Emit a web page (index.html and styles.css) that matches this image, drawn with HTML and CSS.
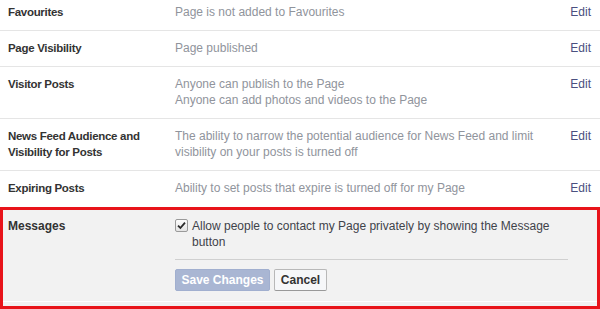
FILE: index.html
```html
<!DOCTYPE html>
<html>
<head>
<meta charset="utf-8">
<link rel="stylesheet" href="styles.css">
</head>
<body>
<div class="settings">
  <div class="row first">
    <div class="label">Favourites</div>
    <div class="value">Page is not added to Favourites</div>
    <a class="edit">Edit</a>
  </div>
  <div class="row">
    <div class="label">Page Visibility</div>
    <div class="value">Page published</div>
    <a class="edit">Edit</a>
  </div>
  <div class="row">
    <div class="label">Visitor Posts</div>
    <div class="value">Anyone can publish to the Page<br>Anyone can add photos and videos to the Page</div>
    <a class="edit">Edit</a>
  </div>
  <div class="row">
    <div class="label">News Feed Audience and Visibility for Posts</div>
    <div class="value">The ability to narrow the potential audience for News Feed and limit visibility on your posts is turned off</div>
    <a class="edit">Edit</a>
  </div>
  <div class="row last">
    <div class="label">Expiring Posts</div>
    <div class="value">Ability to set posts that expire is turned off for my Page</div>
    <a class="edit">Edit</a>
  </div>
  <div class="messages">
    <div class="msg-inner">
      <div class="label msg-label">Messages</div>
      <div class="msg-body">
        <div class="check-line">
          <span class="checkbox"><svg width="9" height="9" viewBox="0 0 9 9"><path d="M1 4.6 L3.4 7 L8 1.6" fill="none" stroke="#2b2b2b" stroke-width="1.8"/></svg></span>
          <span class="check-text">Allow people to contact my Page privately by showing the Message button</span>
        </div>
        <div class="divider"></div>
        <div class="buttons">
          <button class="btn save">Save Changes</button>
          <button class="btn cancel">Cancel</button>
        </div>
      </div>
    </div>
  </div>
</div>
</body>
</html>
```

FILE: styles.css
```css
html, body {
  margin: 0;
  padding: 0;
  background: #fff;
}
body {
  font-family: "Liberation Sans", Arial, sans-serif;
  font-size: 12px;
  line-height: 16px;
  width: 600px;
  height: 309px;
  overflow: hidden;
}
.row {
  display: grid;
  grid-template-columns: 155px 1fr auto;
  column-gap: 12px;
  padding: 9px 9px 10px 8px;
  border-bottom: 1px solid #e5e5e5;
}
.row.first {
  padding-top: 4px;
}
.row.last {
  border-bottom: none;
  padding-bottom: 11px;
}
.label {
  font-weight: bold;
  font-size: 11.5px;
  letter-spacing: -0.3px;
  color: #333;
}
.msg-label {
  font-size: 12px;
  letter-spacing: 0;
}
.value {
  color: #90949c;
  padding-right: 18px;
}
.edit {
  color: #4a5080;
  cursor: pointer;
}
.messages {
  border: 3px solid #e8141a;
  height: 96px;
  background: #f2f2f2;
}
.msg-inner {
  display: grid;
  grid-template-columns: 155px 393px;
  column-gap: 12px;
  padding: 8px 0 10px 5px;
  border-bottom: 1px solid #fff;
}
.check-line {
  display: flex;
  align-items: flex-start;
  gap: 4px;
  color: #3f434a;
}
.checkbox {
  flex: none;
  width: 11px;
  height: 11px;
  margin-top: 1px;
  border: 1px solid #9a9a9a;
  border-radius: 2px;
  background: linear-gradient(#fdfdfd, #e4e4e4);
  display: flex;
  align-items: center;
  justify-content: center;
}
.divider {
  margin-top: 9px;
  height: 0;
  border-top: 1px solid #d0d0d0;
}
.buttons {
  display: flex;
  gap: 4px;
  margin-top: 9px;
}
.btn {
  font-family: "Liberation Sans", Arial, sans-serif;
  font-size: 12px;
  font-weight: bold;
  height: 22px;
  line-height: 20px;
  border-radius: 2px;
  margin: 0;
  white-space: nowrap;
  text-align: center;
}
.save {
  background: #a9b6d3;
  border: 1px solid #a1afcf;
  color: #fff;
  padding: 0 4px;
  width: 95px;
}
.cancel {
  background: #f6f7f9;
  border: 1px solid #b8b8b8;
  border-bottom-color: #999;
  color: #333;
  padding: 0 4px;
  width: 53px;
}
```
